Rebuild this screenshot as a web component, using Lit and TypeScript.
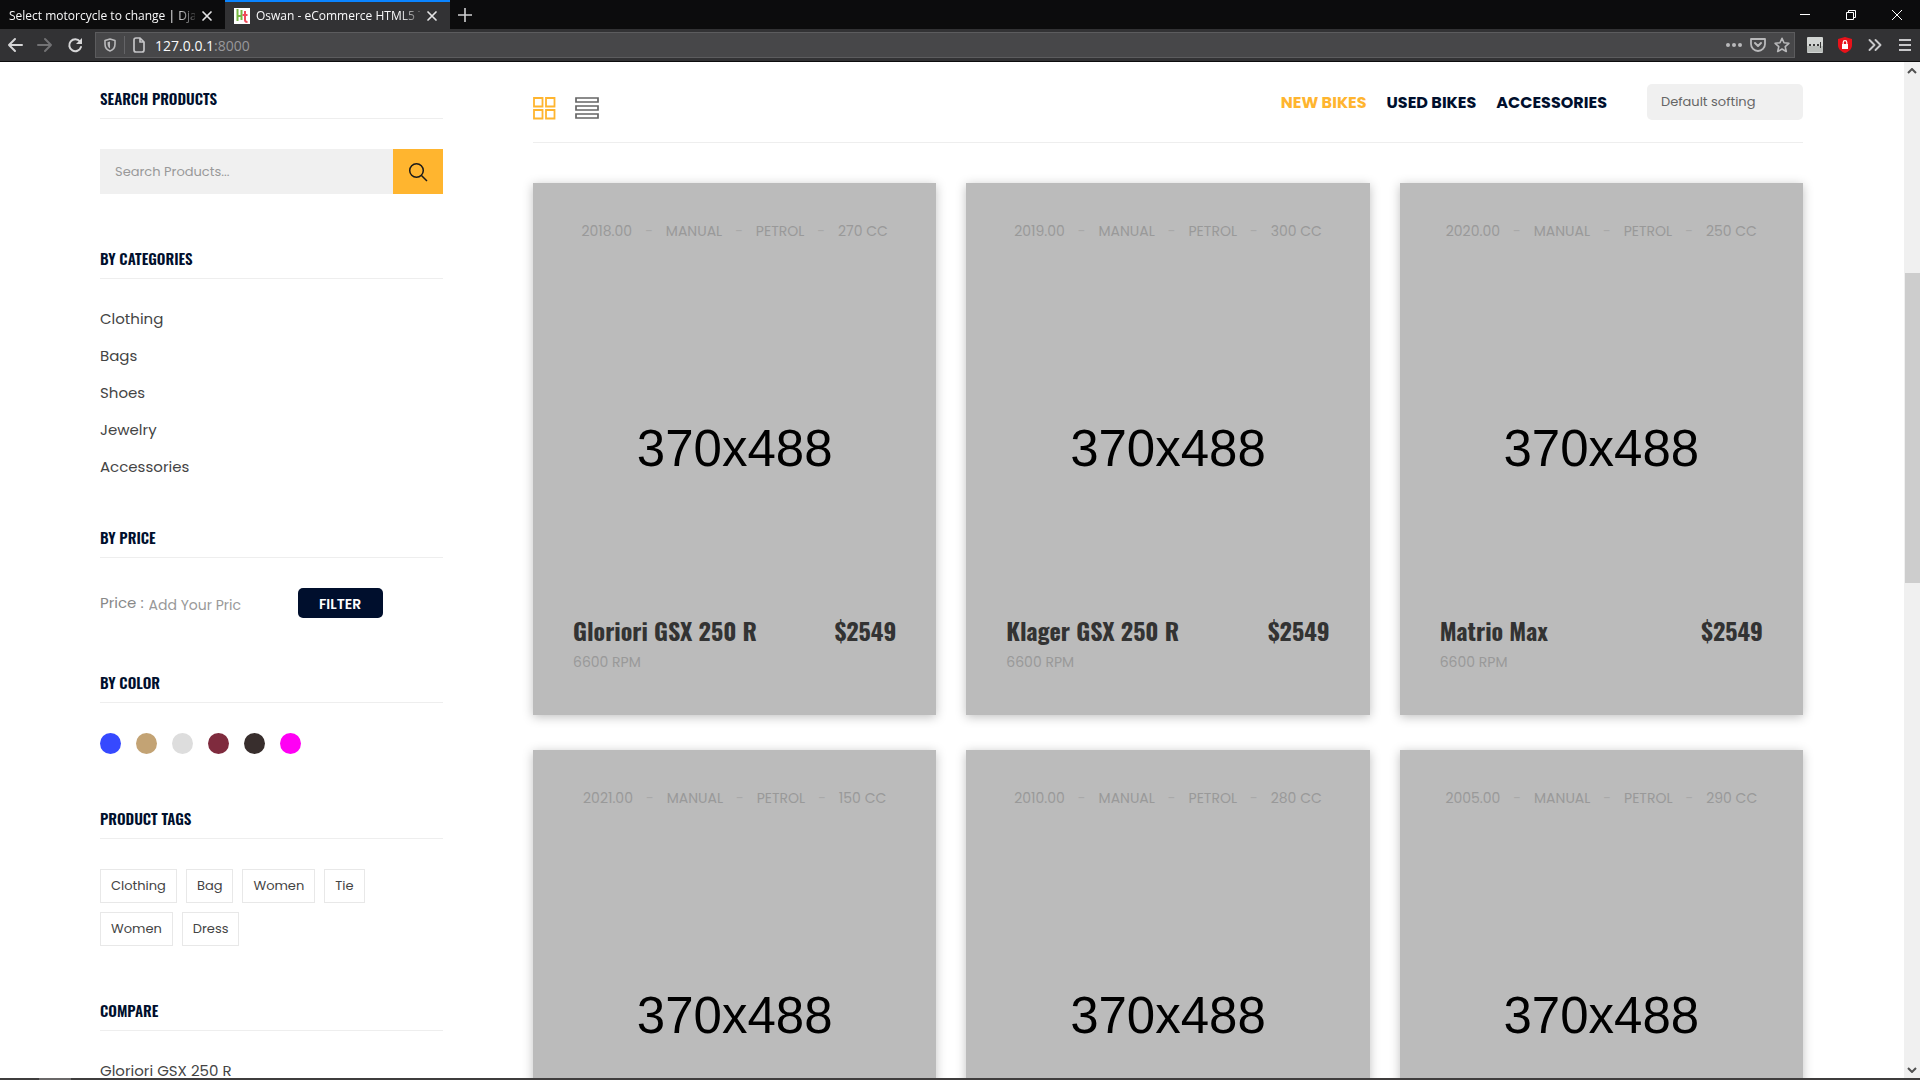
import { LitElement, html, css, svg } from "lit";
import { customElement, property } from "lit/decorators.js";

interface Bike {
  year: string;
  cc: string;
  name: string;
}

const BIKES: Bike[] = [
  { year: "2018.00", cc: "270 CC", name: "Gloriori GSX 250 R" },
  { year: "2019.00", cc: "300 CC", name: "Klager GSX 250 R" },
  { year: "2020.00", cc: "250 CC", name: "Matrio Max" },
  { year: "2021.00", cc: "150 CC", name: "Gloriori GSX 250 R" },
  { year: "2010.00", cc: "280 CC", name: "Klager GSX 250 R" },
  { year: "2005.00", cc: "290 CC", name: "Matrio Max" },
];

const CATEGORIES = ["Clothing", "Bags", "Shoes", "Jewelry", "Accessories"];
const TAGS = ["Clothing", "Bag", "Women", "Tie", "Women", "Dress"];
const COLORS = [
  ["Blue", "#3649ff"],
  ["Tan", "#c3a374"],
  ["Light grey", "#dddddd"],
  ["Maroon", "#7f2b3e"],
  ["Charcoal", "#382e2d"],
  ["Magenta", "#ff00f4"],
];

const closeX = svg`<path d="M2 2l8 8M10 2l-8 8" stroke="#e4e4e5" stroke-width="1.7" stroke-linecap="round"/>`;

/* ---------- Browser window frame ---------- */
@customElement("browser-bar")
export class BrowserBar extends LitElement {
  static styles = css`
    :host {
      display: block;
      flex: none;
      font-family: "Segoe UI", "Open Sans", "Noto Sans", sans-serif;
      color: #f9f9fa;
      background: #0c0c0d;
    }
    * { box-sizing: border-box; }
    svg { display: block; fill: none; flex: none; }
    button {
      border: 0;
      padding: 0;
      background: none;
      display: flex;
      align-items: center;
      justify-content: center;
      flex: none;
    }
    .tabs { display: flex; height: 29px; align-items: stretch; }
    .tab {
      display: flex;
      align-items: center;
      gap: 6px;
      width: 225px;
      padding: 2px 12px 0 9px;
      font-size: 12px;
      flex: none;
    }
    .tab.active { background: #323234; border-top: 2px solid #0a84ff; padding-top: 0; }
    .label {
      flex: 1;
      min-width: 0;
      overflow: hidden;
      white-space: nowrap;
      mask-image: linear-gradient(to right, #000 calc(100% - 20px), rgba(0, 0, 0, 0.2));
    }
    .new { width: 30px; }
    .window { display: flex; margin-left: auto; }
    .window button { width: 46px; }
    .tools {
      display: flex;
      align-items: center;
      height: 33px;
      padding: 0 0 1px;
      background: #323234;
      border-bottom: 1px solid #0c0c0d;
    }
    .tools button { width: 30px; height: 26px; }
    .address {
      flex: 1;
      display: flex;
      align-items: center;
      height: 26px;
      margin: 0 5px;
      padding-left: 2px;
      border: 1px solid #5c5c5e;
      background: #474749;
    }
    .address button { width: 24px; }
    .divider { width: 1px; height: 18px; background: #646467; margin: 0 2px; }
    .url {
      flex: 1;
      min-width: 0;
      font-size: 14px;
      padding: 1px 0 0 4px;
    }
    .port { color: #98989b; }
  `;

  render() {
    return html`
      <div class="tabs">
        <div class="tab">
          <span class="label">Select motorcycle to change | Djang</span>
          <button aria-label="Close tab"><svg width="12" height="12">${closeX}</svg></button>
        </div>
        <div class="tab active">
          <svg width="16" height="16">
            <rect width="16" height="16" fill="#fff" />
            <path d="M3.500 1v12M3 8h4M7.500 2v10" stroke="#77b843" stroke-width="2" />
            <path d="M11 3v9q0 2 2.500 2M8.500 7h5" stroke="#ef4a5a" stroke-width="2" />
          </svg>
          <span class="label">Oswan - eCommerce HTML5 Te</span>
          <button aria-label="Close tab"><svg width="12" height="12">${closeX}</svg></button>
        </div>
        <button class="new" aria-label="New tab">
          <svg width="14" height="14"><path d="M7 0v14M0 7h14" stroke="#d0d0d1" stroke-width="1.6" /></svg>
        </button>
        <div class="window">
          <button aria-label="Minimize"><svg width="10" height="10"><path d="M0 4.5h10" stroke="#fff" /></svg></button>
          <button aria-label="Restore">
            <svg width="10" height="10"><path d="M.5 2.5h7v7h-7zM2.500 2.500v-2h7v7h-2" stroke="#fff" /></svg>
          </button>
          <button aria-label="Close"><svg width="10" height="10"><path d="M0 0l10 10M10 0L0 10" stroke="#fff" /></svg></button>
        </div>
      </div>
      <div class="tools">
        <button aria-label="Back">
          <svg width="16" height="16"><path d="M15 8H2M8 2L2 8l6 6" stroke="#d6d6d7" stroke-width="2" stroke-linecap="round" stroke-linejoin="round" /></svg>
        </button>
        <button aria-label="Forward">
          <svg width="16" height="16"><path d="M1 8h13M8 2l6 6-6 6" stroke="#727274" stroke-width="2" stroke-linecap="round" stroke-linejoin="round" /></svg>
        </button>
        <button aria-label="Reload">
          <svg width="16" height="16"><path d="M13 4.500A6 6 0 1 0 14 10" stroke="#d6d6d7" stroke-width="2" stroke-linecap="round" /><path d="M15 1v6H9z" fill="#d6d6d7" /></svg>
        </button>
        <div class="address">
          <button aria-label="Tracking protection">
            <svg width="14" height="14"><path d="M7 1L2 2.500V6c0 3.500 2 6 5 7 3-1 5-3.500 5-7V2.500z" stroke="#b9b9bb" stroke-width="1.6" stroke-linejoin="round" /><path d="M7 3.500v7C5 9.500 4.500 8 4.500 4.300z" fill="#b9b9bb" /></svg>
          </button>
          <span class="divider"></span>
          <button aria-label="Site information">
            <svg width="14" height="16"><path d="M2 3q0-2 2-2h4l4 4v8q0 2-2 2H4q-2 0-2-2zM8 1v4h4" stroke="#c4c4c6" stroke-width="1.700" stroke-linejoin="round" /></svg>
          </button>
          <span class="url">127.0.0.1<span class="port">:8000</span></span>
          <button aria-label="Page actions">
            <svg width="16" height="16"><g fill="#b9b9bb"><circle cx="2" cy="8" r="2" /><circle cx="8" cy="8" r="2" /><circle cx="14" cy="8" r="2" /></g></svg>
          </button>
          <button aria-label="Save to Pocket">
            <svg width="16" height="16"><path d="M1 2h14v5a7 7 0 0 1-14 0z" stroke="#b9b9bb" stroke-width="1.800" stroke-linejoin="round" /><path d="M5 6l3 3 3-3" stroke="#b9b9bb" stroke-width="2" stroke-linecap="round" stroke-linejoin="round" /></svg>
          </button>
          <button aria-label="Bookmark">
            <svg width="16" height="16"><path d="M8 1.300l2 4.500 4.900.5-3.700 3.300 1.100 4.900L8 12l-4.300 2.500 1.100-4.900L1.100 6.300 6 5.800z" stroke="#b9b9bb" stroke-width="1.600" stroke-linejoin="round" /></svg>
          </button>
        </div>
        <button aria-label="Password manager">
          <svg width="16" height="16"><rect width="16" height="16" rx="1" fill="#d2d5d3" /><path d="M0 9h16v6H0z" fill="#b9bdba" /><path d="M2 7h2v2H2zM6 7h2v2H6zM10 7h2v2h-2zM13 5h1v6h-1z" fill="#3a3a3a" /></svg>
        </button>
        <button aria-label="Ad blocker">
          <svg width="16" height="16"><path d="M8 0l7 2v6c0 4-3 6.500-7 8-4-1.500-7-4-7-8V2z" fill="#e8121a" /><path d="M5 7h6v5H5z" fill="#fff" /><path d="M6.200 7V5.500a1.800 1.800 0 0 1 3.600 0V7" stroke="#fff" stroke-width="1.200" /></svg>
        </button>
        <button aria-label="More tools">
          <svg width="14" height="14"><path d="M1.500 2l5 5-5 5M7.500 2l5 5-5 5" stroke="#c8c8ca" stroke-width="1.900" stroke-linecap="round" stroke-linejoin="round" /></svg>
        </button>
        <button aria-label="Menu">
          <svg width="12" height="12"><path d="M0 1h12M0 6h12M0 11h12" stroke="#c8c8ca" stroke-width="2" /></svg>
        </button>
      </div>
    `;
  }
}

/* ---------- Product card ---------- */
@customElement("bike-card")
export class BikeCard extends LitElement {
  @property({ attribute: false }) bike!: Bike;

  static styles = css`
    :host {
      display: grid;
      aspect-ratio: 370 / 488;
      background: #bbbbbb;
      box-shadow: 0 2px 10px rgba(0, 0, 0, 0.25);
      font-family: Poppins, Inter, "Open Sans", sans-serif;
      font-size: 14px;
      line-height: 20px;
      color: #999999;
    }
    .specs, .size, .info { grid-area: 1 / 1; }
    .specs {
      list-style: none;
      margin: 0;
      padding: 38px 0 0;
      display: flex;
      justify-content: center;
      align-self: start;
      gap: 13px;
    }
    .dash { color: #a9a9a9; }
    .size {
      place-self: center;
      font: 51px/60px "Liberation Sans", Arial, sans-serif;
      color: #000;
    }
    .info {
      align-self: end;
      display: flex;
      justify-content: space-between;
      padding: 0 40px 43px;
    }
    h4, .price {
      margin: 0 0 7px;
      font: 700 24px/30px Oswald, "Roboto Condensed", "Liberation Sans Narrow", "Liberation Sans", sans-serif;
      color: #333333;
    }
    p { margin: 0; }
  `;

  render() {
    const { year, cc, name } = this.bike;
    return html`
      <ul class="specs">
        <li>${year}</li><li class="dash">-</li>
        <li>MANUAL</li><li class="dash">-</li>
        <li>PETROL</li><li class="dash">-</li>
        <li>${cc}</li>
      </ul>
      <div class="size">370x488</div>
      <div class="info">
        <div>
          <h4>${name}</h4>
          <p>6600 RPM</p>
        </div>
        <span class="price">$2549</span>
      </div>
    `;
  }
}

/* ---------- Sidebar filters ---------- */
@customElement("shop-sidebar")
export class ShopSidebar extends LitElement {
  static styles = css`
    :host {
      display: block;
      font-family: Poppins, Inter, "Open Sans", sans-serif;
      font-size: 15px;
      line-height: 20px;
      color: #444444;
    }
    * { box-sizing: border-box; }
    a { color: inherit; text-decoration: none; }
    ul { list-style: none; margin: 0; padding: 0; }
    input, button { font-family: inherit; border: 0; border-radius: 0; }
    input::placeholder { color: #999999; opacity: 1; }
    section { margin-bottom: 55px; }
    section.lines { margin-bottom: 51px; }
    h3 {
      margin: 0 0 30px;
      padding-bottom: 11px;
      border-bottom: 1px solid #eeeeee;
      font: 600 15px/18px Oswald, "Roboto Condensed", "Liberation Sans Narrow", "Liberation Sans", sans-serif;
      text-transform: uppercase;
      color: #000f2d;
    }
    .search { display: flex; height: 45px; }
    .search input {
      flex: 1;
      min-width: 0;
      padding: 0 15px;
      background: #f0f0f0;
      font-size: 13px;
    }
    .search button {
      width: 50px;
      padding: 0;
      background: #ffb52f;
      display: grid;
      place-items: center;
    }
    .list { display: grid; gap: 17px; }
    .price { display: flex; align-items: center; height: 30px; color: #888888; }
    .price input {
      width: 93px;
      margin-left: 5px;
      padding: 4px 0 0;
      font-size: 14px;
      background: none;
    }
    .price button {
      width: 85px;
      height: 30px;
      margin-left: 56px;
      border-radius: 5px;
      background: #000f2d;
      color: #fff;
      font-size: 14px;
      font-weight: 600;
      padding: 2px 0 0;
    }
    .colors { display: flex; gap: 15px; }
    .colors button { width: 21px; height: 21px; padding: 0; border-radius: 50%; }
    .tags { display: flex; flex-wrap: wrap; gap: 9px; padding-right: 60px; }
    .tags a {
      display: block;
      padding: 6px 10px;
      border: 1px solid #e8e8e8;
      font-size: 13px;
    }
  `;

  render() {
    return html`
      <section>
        <h3>Search Products</h3>
        <form class="search">
          <input type="text" aria-label="Search Products" placeholder="Search Products..." />
          <button type="button" aria-label="Search">
            <svg width="20" height="20" fill="none" stroke="#1a1a1a" stroke-width="1.500">
              <circle cx="8.500" cy="8.500" r="6.800" /><path d="M13.500 13.500l5.500 5.500" />
            </svg>
          </button>
        </form>
      </section>
      <section class="lines">
        <h3>By Categories</h3>
        <ul class="list">${CATEGORIES.map((c) => html`<li><a href="#">${c}</a></li>`)}</ul>
      </section>
      <section>
        <h3>By Price</h3>
        <form class="price">
          <label for="price">Price :</label>
          <input id="price" type="text" placeholder="Add Your Pric" />
          <button type="button">FILTER</button>
        </form>
      </section>
      <section>
        <h3>By Color</h3>
        <div class="colors">
          ${COLORS.map(([name, value]) => html`<button aria-label=${name} style="background:${value}"></button>`)}
        </div>
      </section>
      <section>
        <h3>Product Tags</h3>
        <div class="tags">${TAGS.map((t) => html`<a href="#">${t}</a>`)}</div>
      </section>
      <section>
        <h3>Compare</h3>
        <ul class="list"><li><a href="#">Gloriori GSX 250 R</a></li></ul>
      </section>
    `;
  }
}

/* ---------- Page ---------- */
@customElement("app-root")
export class AppRoot extends LitElement {
  static styles = css`
    :host {
      display: flex;
      flex-direction: column;
      height: 100vh;
      overflow: hidden;
      background: #fff;
      box-sizing: border-box;
      font-family: Poppins, Inter, "Open Sans", sans-serif;
    }
    * { box-sizing: border-box; }
    .viewport { flex: 1; min-height: 0; display: flex; }
    .page {
      flex: 1;
      min-width: 0;
      overflow: hidden;
      display: grid;
      grid-template-columns: 343px 1fr;
      gap: 90px;
      align-items: start;
      padding: 0 101px 0 100px;
    }
    .side { padding-top: 27px; }
    .main { padding-top: 22px; }
    .bar {
      display: flex;
      align-items: center;
      padding-bottom: 22px;
      border-bottom: 1px solid #eeeeee;
      margin-bottom: 40px;
    }
    .view { border: 0; padding: 0; background: none; margin: 12px 19px 0 0; height: 24px; }
    .view svg { display: block; fill: none; }
    nav { display: flex; gap: 20px; margin-left: auto; padding-top: 2px; }
    nav a {
      font-size: 16px;
      font-weight: 700;
      line-height: 24px;
      color: #000f2d;
      text-decoration: none;
    }
    nav a.on { color: #ffb52f; }
    select {
      appearance: none;
      width: 156px;
      height: 36px;
      margin-left: 40px;
      padding: 0 14px 2px;
      border: 0;
      border-radius: 5px;
      background: #f0f0f0;
      color: #666666;
      font-family: inherit;
      font-size: 13px;
    }
    .cards { display: grid; grid-template-columns: repeat(3, 1fr); gap: 35px 30px; }
    .scroll {
      width: 16px;
      display: flex;
      flex-direction: column;
      align-items: center;
      background: #f0f0f0;
      padding: 6px 0 5px;
    }
    .scroll svg { flex: none; fill: none; stroke: #505050; stroke-width: 2; }
    .before { flex: 200; }
    .thumb { flex: 312; width: 15px; background: #cdcdcd; }
    .after { flex: 487; }
    .taskbar { flex: none; height: 2px; padding-left: 39px; background: #3f3d3d; }
    .task { width: 32px; height: 2px; background: #6a6868; }
  `;

  render() {
    return html`
      <browser-bar></browser-bar>
      <div class="viewport">
        <div class="page">
          <shop-sidebar class="side"></shop-sidebar>
          <main class="main">
            <div class="bar">
              <button class="view" aria-label="Grid view">
                <svg width="23" height="23" stroke="#ffb52f" stroke-width="1.800">
                  <path d="M1 1h8.500v8.500H1zM13 1h8.500v8.500H13zM1 13h8.500v8.500H1zM13 13h8.500v8.500H13z" />
                </svg>
              </button>
              <button class="view" aria-label="List view">
                <svg width="24" height="23" stroke="#666666" stroke-width="1.700">
                  <path d="M1 1h22v4H1zM1 9h22v4H1zM1 17h22v4H1z" />
                </svg>
              </button>
              <nav>
                <a class="on" href="#">NEW BIKES</a>
                <a href="#">USED BIKES</a>
                <a href="#">ACCESSORIES</a>
              </nav>
              <select aria-label="Sort products"><option>Default softing</option></select>
            </div>
            <div class="cards">${BIKES.map((b) => html`<bike-card .bike=${b}></bike-card>`)}</div>
          </main>
        </div>
        <div class="scroll" aria-hidden="true">
          <svg width="10" height="6"><path d="M1 5l4-4 4 4" /></svg>
          <span class="before"></span>
          <span class="thumb"></span>
          <span class="after"></span>
          <svg width="10" height="6"><path d="M1 1l4 4 4-4" /></svg>
        </div>
      </div>
      <div class="taskbar"><div class="task"></div></div>
    `;
  }
}
